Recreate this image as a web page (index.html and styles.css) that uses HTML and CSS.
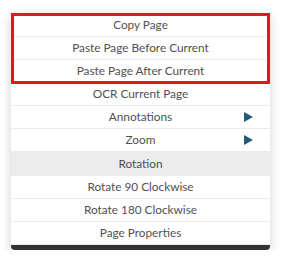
FILE: index.html
```html
<!DOCTYPE html>
<html>
<head>
<meta charset="utf-8">
<link rel="stylesheet" href="styles.css">
</head>
<body>
<div class="menu">
  <div class="group highlighted">
    <div class="item">Copy Page</div>
    <div class="item">Paste Page Before Current</div>
    <div class="item">Paste Page After Current</div>
  </div>
  <div class="item">OCR Current Page</div>
  <div class="item sub"><span class="spacer"></span><span class="label">Annotations</span><span class="arrow"></span></div>
  <div class="item sub"><span class="spacer"></span><span class="label">Zoom</span><span class="arrow"></span></div>
  <div class="header">Rotation</div>
  <div class="item">Rotate 90 Clockwise</div>
  <div class="item">Rotate 180 Clockwise</div>
  <div class="item">Page Properties</div>
  <div class="footer"></div>
</div>
</body>
</html>
```
FILE: styles.css
```css
html, body {
  margin: 0;
  padding: 0;
  background: #ffffff;
}
body {
  padding: 13px 0 0 11px;
  font-family: "Lato", "Open Sans", sans-serif;
  font-size: 11.8px;
  color: #505050;
}
.menu {
  width: 259px;
  background: #ffffff;
  padding-top: 1px;
  border-radius: 0 0 4px 4px;
  box-shadow: 0 3px 12px rgba(0, 0, 0, 0.18);
  overflow: hidden;
}
.group {
  position: relative;
}
.highlighted::after {
  content: "";
  position: absolute;
  top: -1px;
  bottom: -1px;
  left: 0;
  right: 0;
  border: 3px solid #e5161f;
  pointer-events: none;
}
.item {
  height: 22px;
  line-height: 22px;
  border-bottom: 1px solid #ebebeb;
  text-align: center;
  white-space: nowrap;
}
.item.sub {
  display: grid;
  grid-template-columns: 1fr auto 1fr;
  align-items: center;
}
.arrow {
  justify-self: end;
  margin-right: 17px;
  width: 0;
  height: 0;
  border-top: 5.5px solid transparent;
  border-bottom: 5.5px solid transparent;
  border-left: 9px solid #245a7a;
}
.header {
  height: 24px;
  line-height: 24px;
  background: #ececec;
  text-align: center;
}
.footer {
  height: 5px;
  background: #333333;
}
```
